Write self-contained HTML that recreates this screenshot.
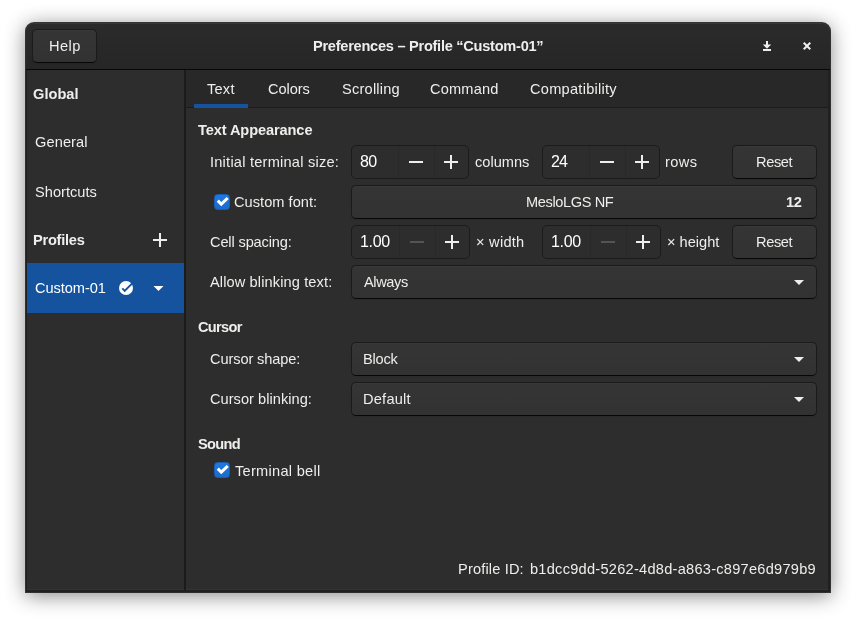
<!DOCTYPE html>
<html lang="en"><head><meta charset="utf-8"><title>Preferences – Profile “Custom-01”</title>
<style>
html,body{margin:0;padding:0;}
body{width:856px;height:621px;background:#fff;position:relative;overflow:hidden;font-family:"Liberation Sans",sans-serif;}
.abs,.t,#win,#win *{position:absolute;box-sizing:border-box;}
.t{will-change:transform;white-space:nowrap;line-height:20px;height:20px;text-shadow:none;}
#win{left:26px;top:23px;width:804px;height:569px;border-radius:8px 8px 0 0;background:#202020;
 box-shadow:0 0 0 1px rgba(12,12,12,0.8),0 3px 20px 1px rgba(0,0,0,0.46);}
#hb{left:0;top:0;width:804px;height:47px;border-radius:8px 8px 0 0;border-bottom:1px solid #070707;
 background:linear-gradient(to top,#262626,#2b2b2b);box-shadow:inset 0 1px rgba(238,238,236,0.07);}
.btn{border:1px solid #1b1b1b;border-bottom-color:#070707;border-radius:5px;
 background:linear-gradient(to top,#323232 2px,#353535);box-shadow:inset 0 1px rgba(255,255,255,0.02),0 1px 2px rgba(0,0,0,0.07);}
#side{left:1px;top:47px;width:157px;height:520px;background:#2d2d2d;border-bottom:1px solid #343434;}
#sep{left:158px;top:47px;width:2px;height:520px;background:#1b1b1b;}
#sel{left:1px;top:240px;width:157px;height:50px;background:#15539e;}
#nbh{left:160px;top:47px;width:642px;height:38px;background:#282828;border-bottom:1px solid #1b1b1b;}
#ul{left:168px;top:81px;width:54px;height:4px;background:#15539e;}
#page{left:160px;top:85px;width:642px;height:482px;background:#2d2d2d;border-bottom:1px solid #343434;}
.spin{border:1px solid #1b1b1b;border-radius:5px;background:#2d2d2d;height:34px;}
.spin i{top:0;width:1px;height:32px;background:rgba(27,27,27,0.18);}
.chk{width:16px;height:16px;border-radius:3.5px;border:1px solid #1a5fb3;background:linear-gradient(to bottom,#2078e0,#1a6bce);}
svg{position:absolute;overflow:visible;}

</style></head>
<body>
<div id="win">
 <div id="hb"></div>
 <div class="btn" style="left:6px;top:6px;width:65px;height:34px;"></div>
 <div id="side"></div>
 <div id="sel"></div>
 <div id="sep"></div>
 <div id="nbh"></div>
 <div id="ul"></div>
 <div id="page"></div>
 <!-- row 1 -->
 <div class="spin" style="left:325px;top:122px;width:118px;"><i style="left:46px"></i><i style="left:82px"></i></div>
 <div class="spin" style="left:516px;top:122px;width:118px;"><i style="left:46px"></i><i style="left:82px"></i></div>
 <div class="btn" style="left:706px;top:122px;width:85px;height:34px;"></div>
 <!-- row 2 -->
 <div class="chk" style="left:188px;top:171px;"></div>
 <div class="btn" style="left:325px;top:162px;width:466px;height:34px;"></div>
 <!-- row 3 -->
 <div class="spin" style="left:325px;top:202px;width:119px;"><i style="left:47px"></i><i style="left:83px"></i></div>
 <div class="spin" style="left:516px;top:202px;width:119px;"><i style="left:47px"></i><i style="left:83px"></i></div>
 <div class="btn" style="left:706px;top:202px;width:85px;height:34px;"></div>
 <!-- row 4 -->
 <div class="btn" style="left:325px;top:242px;width:466px;height:34px;"></div>
 <!-- cursor -->
 <div class="btn" style="left:325px;top:319px;width:466px;height:34px;"></div>
 <div class="btn" style="left:325px;top:359px;width:466px;height:34px;"></div>
 <!-- bell -->
 <div class="chk" style="left:188px;top:439px;"></div>
</div>
<svg width="856" height="621" viewBox="0 0 856 621" style="left:0;top:0;">
 <g fill="#eeeeec">
  <!-- minimize-to-tray style icon -->
  <path d="M766 41h2v3.5h3.2l-4.2 4.2-4.2-4.2h3.2z"/><rect x="763" y="49" width="8" height="2"/>
  <!-- close -->
  <path d="M803 43.4l1.4-1.4 2.6 2.6 2.6-2.6 1.4 1.4-2.6 2.6 2.6 2.6-1.4 1.4-2.6-2.6-2.6 2.6-1.4-1.4 2.6-2.6z"/>
  <!-- sidebar plus -->
  <path d="M159 233h2v6h6v2h-6v6h-2v-6h-6v-2h6z"/>
 </g>
 <g fill="#ffffff">
  <!-- selected row: check circle and arrow -->
  <circle cx="126" cy="288" r="7"/>
  <path fill="#15539e" d="M121.63 289.07L124.70 292.15L132.87 283.98L131.53 282.64L124.70 289.46L122.97 287.73z"/>
  <path d="M153.5 286h10l-5 5z"/>
 </g>
 <g fill="#eeeeec">
  <!-- spin icons row1 -->
  <rect x="409" y="161" width="14" height="2"/>
  <path d="M450 155h2v6h6v2h-6v6h-2v-6h-6v-2h6z"/>
  <rect x="600" y="161" width="14" height="2"/>
  <path d="M641 155h2v6h6v2h-6v6h-2v-6h-6v-2h6z"/>
  <!-- row3 -->
  <rect x="410" y="241" width="14" height="2" opacity="0.2"/>
  <path d="M451 235h2v6h6v2h-6v6h-2v-6h-6v-2h6z"/>
  <rect x="601" y="241" width="14" height="2" opacity="0.2"/>
  <path d="M642 235h2v6h6v2h-6v6h-2v-6h-6v-2h6z"/>
  <!-- combo arrows -->
  <path d="M794 280h10l-5 5z"/>
  <path d="M794 357h10l-5 5z"/>
  <path d="M794 397h10l-5 5z"/>
 </g>
 <g fill="none" stroke="#ffffff" stroke-width="3" stroke-linecap="butt" stroke-linejoin="miter">
  <path d="M217.8 200.6l3.5 3.6 6.4-6.2"/>
  <path d="M217.8 468.6l3.5 3.6 6.4-6.2"/>
 </g>
</svg>

<span class="t" id="help" style="left:49.00px;top:36.00px;font-size:14.6px;letter-spacing:0.483px;color:#eeeeec;">Help</span>
<span class="t" id="title" style="left:313.00px;top:36.00px;font-size:14.6px;letter-spacing:-0.270px;color:#eeeeec;font-weight:bold;">Preferences – Profile “Custom-01”</span>
<span class="t" id="global" style="left:33.00px;top:84.00px;font-size:14.6px;letter-spacing:0.032px;color:#eeeeec;font-weight:bold;">Global</span>
<span class="t" id="general" style="left:35.00px;top:132.00px;font-size:14.6px;letter-spacing:0.097px;color:#eeeeec;">General</span>
<span class="t" id="shortcuts" style="left:35.00px;top:182.00px;font-size:14.6px;letter-spacing:0.014px;color:#eeeeec;">Shortcuts</span>
<span class="t" id="profiles" style="left:33.00px;top:230.00px;font-size:14.6px;letter-spacing:-0.238px;color:#eeeeec;font-weight:bold;">Profiles</span>
<span class="t" id="custom01" style="left:35.00px;top:278.00px;font-size:14.6px;letter-spacing:-0.052px;color:#ffffff;">Custom-01</span>
<span class="t" id="tab1" style="left:207.00px;top:79.00px;font-size:14.6px;letter-spacing:0.231px;color:#eeeeec;">Text</span>
<span class="t" id="tab2" style="left:268.00px;top:79.00px;font-size:14.6px;letter-spacing:-0.080px;color:#eeeeec;">Colors</span>
<span class="t" id="tab3" style="left:342.00px;top:79.00px;font-size:14.6px;letter-spacing:0.221px;color:#eeeeec;">Scrolling</span>
<span class="t" id="tab4" style="left:430.00px;top:79.00px;font-size:14.6px;letter-spacing:0.181px;color:#eeeeec;">Command</span>
<span class="t" id="tab5" style="left:530.00px;top:79.00px;font-size:14.6px;letter-spacing:0.257px;color:#eeeeec;">Compatibility</span>
<span class="t" id="h1" style="left:198.00px;top:120.00px;font-size:14.6px;letter-spacing:-0.106px;color:#eeeeec;font-weight:bold;">Text Appearance</span>
<span class="t" id="l1" style="left:210.00px;top:152.00px;font-size:14.6px;letter-spacing:0.227px;color:#eeeeec;">Initial terminal size:</span>
<span class="t" id="v80" style="left:360.00px;top:152.00px;font-size:16px;letter-spacing:-0.620px;color:#ffffff;">80</span>
<span class="t" id="columns" style="left:475.00px;top:152.00px;font-size:14.6px;letter-spacing:0.013px;color:#eeeeec;">columns</span>
<span class="t" id="v24" style="left:551.00px;top:152.00px;font-size:16px;letter-spacing:-0.862px;color:#ffffff;">24</span>
<span class="t" id="rows" style="left:665.00px;top:152.00px;font-size:14.6px;letter-spacing:0.380px;color:#eeeeec;">rows</span>
<span class="t" id="reset1" style="left:756.00px;top:152.00px;font-size:14.6px;letter-spacing:-0.369px;color:#eeeeec;">Reset</span>
<span class="t" id="l2" style="left:234.00px;top:192.00px;font-size:14.6px;letter-spacing:0.039px;color:#eeeeec;">Custom font:</span>
<span class="t" id="font" style="left:526.00px;top:192.00px;font-size:14.6px;letter-spacing:-0.390px;color:#eeeeec;">MesloLGS NF</span>
<span class="t" id="v12" style="left:786.00px;top:192.00px;font-size:14.6px;letter-spacing:-0.331px;color:#eeeeec;font-weight:bold;">12</span>
<span class="t" id="l3" style="left:210.00px;top:232.00px;font-size:14.6px;letter-spacing:-0.143px;color:#eeeeec;">Cell spacing:</span>
<span class="t" id="v100a" style="left:360.00px;top:232.00px;font-size:16px;letter-spacing:-0.324px;color:#ffffff;">1.00</span>
<span class="t" id="xwidth" style="left:476.00px;top:232.00px;font-size:14.6px;letter-spacing:0.256px;color:#eeeeec;">× width</span>
<span class="t" id="v100b" style="left:551.00px;top:232.00px;font-size:16px;letter-spacing:-0.324px;color:#ffffff;">1.00</span>
<span class="t" id="xheight" style="left:667.00px;top:232.00px;font-size:14.6px;letter-spacing:0.012px;color:#eeeeec;">× height</span>
<span class="t" id="reset2" style="left:756.00px;top:232.00px;font-size:14.6px;letter-spacing:-0.369px;color:#eeeeec;">Reset</span>
<span class="t" id="l4" style="left:210.00px;top:272.00px;font-size:14.6px;letter-spacing:0.114px;color:#eeeeec;">Allow blinking text:</span>
<span class="t" id="always" style="left:364.00px;top:272.00px;font-size:14.6px;letter-spacing:-0.391px;color:#eeeeec;">Always</span>
<span class="t" id="h2" style="left:198.00px;top:317.00px;font-size:14.6px;letter-spacing:-0.684px;color:#eeeeec;font-weight:bold;">Cursor</span>
<span class="t" id="l5" style="left:210.00px;top:349.00px;font-size:14.6px;letter-spacing:-0.108px;color:#eeeeec;">Cursor shape:</span>
<span class="t" id="block" style="left:363.00px;top:349.00px;font-size:14.6px;letter-spacing:-0.220px;color:#eeeeec;">Block</span>
<span class="t" id="l6" style="left:210.00px;top:389.00px;font-size:14.6px;letter-spacing:0.032px;color:#eeeeec;">Cursor blinking:</span>
<span class="t" id="default" style="left:363.00px;top:389.00px;font-size:14.6px;letter-spacing:0.229px;color:#eeeeec;">Default</span>
<span class="t" id="h3" style="left:198.00px;top:434.00px;font-size:14.6px;letter-spacing:-0.681px;color:#eeeeec;font-weight:bold;">Sound</span>
<span class="t" id="bell" style="left:235.00px;top:461.00px;font-size:14.6px;letter-spacing:0.272px;color:#eeeeec;">Terminal bell</span>
<span class="t" id="pid" style="left:458.00px;top:559.00px;font-size:14.6px;letter-spacing:0.156px;color:#eeeeec;">Profile ID:</span>
<span class="t" id="uuid" style="left:530.00px;top:559.00px;font-size:14.6px;letter-spacing:0.258px;color:#eeeeec;">b1dcc9dd-5262-4d8d-a863-c897e6d979b9</span>
</body></html>
